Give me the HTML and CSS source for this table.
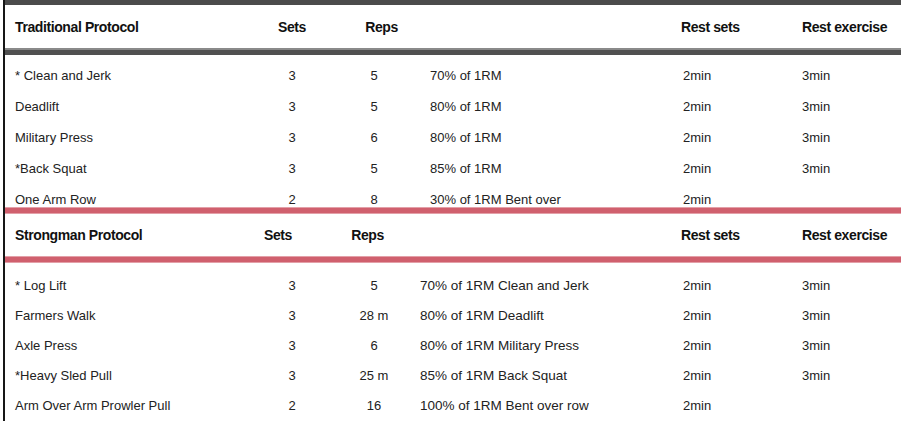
FILE: index.html
```html
<!DOCTYPE html>
<html>
<head>
<meta charset="utf-8">
<link rel="stylesheet" href="styles.css">
</head>
<body>
<div class="sheet">
  <div class="bar bar-top"></div>
  <div class="row head">
    <div class="c-name">Traditional Protocol</div>
    <div class="c-sets">Sets</div>
    <div class="c-reps h-reps-trad">Reps</div>
    <div class="c-pct"></div>
    <div class="c-rs h-rs">Rest sets</div>
    <div class="c-re">Rest exercise</div>
  </div>
  <div class="bar bar-gray"></div>
  <div class="body body-trad">
    <div class="row"><div class="c-name">* Clean and Jerk</div><div class="c-sets">3</div><div class="c-reps">5</div><div class="c-pct">70% of 1RM</div><div class="c-rs">2min</div><div class="c-re">3min</div></div>
    <div class="row"><div class="c-name">Deadlift</div><div class="c-sets">3</div><div class="c-reps">5</div><div class="c-pct">80% of 1RM</div><div class="c-rs">2min</div><div class="c-re">3min</div></div>
    <div class="row"><div class="c-name">Military Press</div><div class="c-sets">3</div><div class="c-reps">6</div><div class="c-pct">80% of 1RM</div><div class="c-rs">2min</div><div class="c-re">3min</div></div>
    <div class="row"><div class="c-name">*Back Squat</div><div class="c-sets">3</div><div class="c-reps">5</div><div class="c-pct">85% of 1RM</div><div class="c-rs">2min</div><div class="c-re">3min</div></div>
    <div class="row row-last"><div class="c-name">One Arm Row</div><div class="c-sets">2</div><div class="c-reps">8</div><div class="c-pct">30% of 1RM Bent over</div><div class="c-rs">2min</div><div class="c-re"></div></div>
  </div>
  <div class="bar bar-red"></div>
  <div class="row head head-strong">
    <div class="c-name">Strongman Protocol</div>
    <div class="c-sets h-sets-strong">Sets</div>
    <div class="c-reps h-reps-strong">Reps</div>
    <div class="c-pct"></div>
    <div class="c-rs h-rs">Rest sets</div>
    <div class="c-re">Rest exercise</div>
  </div>
  <div class="bar bar-red"></div>
  <div class="body body-strong">
    <div class="row"><div class="c-name">* Log Lift</div><div class="c-sets">3</div><div class="c-reps">5</div><div class="c-pct">70% of 1RM Clean and Jerk</div><div class="c-rs">2min</div><div class="c-re">3min</div></div>
    <div class="row"><div class="c-name">Farmers Walk</div><div class="c-sets">3</div><div class="c-reps">28 m</div><div class="c-pct">80% of 1RM Deadlift</div><div class="c-rs">2min</div><div class="c-re">3min</div></div>
    <div class="row"><div class="c-name">Axle Press</div><div class="c-sets">3</div><div class="c-reps">6</div><div class="c-pct">80% of 1RM Military Press</div><div class="c-rs">2min</div><div class="c-re">3min</div></div>
    <div class="row"><div class="c-name">*Heavy Sled Pull</div><div class="c-sets">3</div><div class="c-reps">25 m</div><div class="c-pct">85% of 1RM Back Squat</div><div class="c-rs">2min</div><div class="c-re">3min</div></div>
    <div class="row"><div class="c-name">Arm Over Arm Prowler Pull</div><div class="c-sets">2</div><div class="c-reps">16</div><div class="c-pct">100% of 1RM Bent over row</div><div class="c-rs">2min</div><div class="c-re"></div></div>
  </div>
</div>
</body>
</html>
```

FILE: styles.css
```css
html, body {
  margin: 0;
  padding: 0;
  background: #ffffff;
}
body {
  width: 903px;
  height: 421px;
  overflow: hidden;
  font-family: "Liberation Sans", Arial, sans-serif;
  color: #222222;
}
.sheet {
  margin-left: 3px;
  width: 898px;
  height: 421px;
  border-left: 2px solid #161616;
  box-sizing: border-box;
}
.bar {
  width: 100%;
  box-sizing: border-box;
}
.bar-top {
  height: 5px;
  background: #4b4b4b;
}
.bar-gray {
  height: 7px;
  background: #505050;
  border-top: 2px solid #8a8a8a;
}
.bar-red {
  height: 7px;
  background: #d0606e;
  border-top: 1px solid #e3a0a8;
  border-bottom: 1px solid #e3a0a8;
}
.row {
  display: grid;
  grid-template-columns: 247px 80px 84px 267px 119px 99px;
  align-items: center;
  height: 31px;
  font-size: 13px;
  white-space: nowrap;
}
.head {
  height: 43px;
  font-size: 14px;
  font-weight: bold;
  letter-spacing: -0.4px;
  color: #111;
}
.head-strong {
  height: 42px;
}
.c-name {
  padding-left: 10px;
}
.c-sets, .c-reps {
  text-align: center;
}
.c-pct {
  padding-left: 14px;
}
.body-strong .c-pct {
  padding-left: 4px;
  font-size: 13.5px;
}
.h-reps-trad {
  padding-left: 15px;
}
.h-sets-strong {
  padding-right: 28px;
}
.h-reps-strong {
  padding-right: 13px;
}
.h-rs {
  margin-left: -2px;
}
.body-trad {
  padding-top: 5px;
}
.body-trad .row-last {
  height: 23px;
  align-items: start;
  line-height: 31px;
}
.body-trad .row-last > div {
  height: 23px;
  overflow: visible;
}
.body-strong {
  padding-top: 7px;
}
.body-strong .row {
  height: 30px;
}
```
